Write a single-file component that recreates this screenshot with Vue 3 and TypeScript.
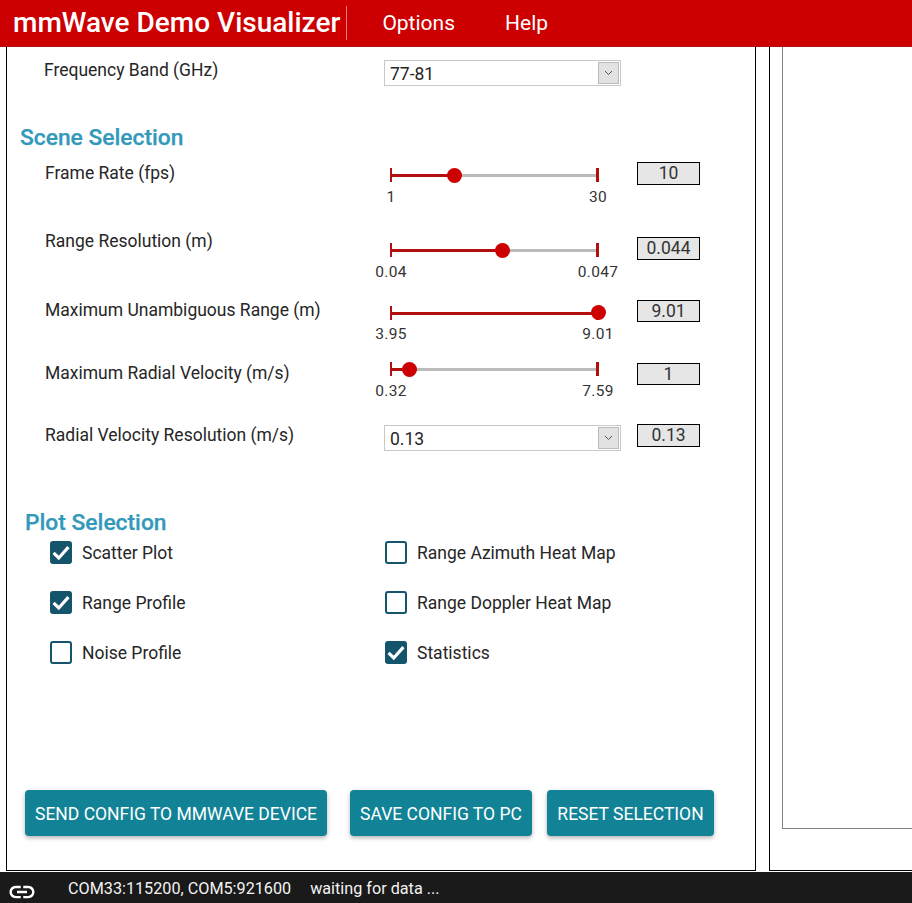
<script setup lang="ts">
interface Row {
  cls: string
  label: string
  value: string
  min?: string
  max?: string
  pct?: number
  select?: string
}

const rows: Row[] = [
  { cls: 'r1', label: 'Frame Rate (fps)', value: '10', min: '1', max: '30', pct: 30.8 },
  { cls: 'r2', label: 'Range Resolution (m)', value: '0.044', min: '0.04', max: '0.047', pct: 54 },
  { cls: 'r3', label: 'Maximum Unambiguous Range (m)', value: '9.01', min: '3.95', max: '9.01', pct: 100.4 },
  { cls: 'r4', label: 'Maximum Radial Velocity (m/s)', value: '1', min: '0.32', max: '7.59', pct: 8.8 },
  { cls: 'r5', label: 'Radial Velocity Resolution (m/s)', value: '0.13', select: '0.13' }
]

const plots = [
  { label: 'Scatter Plot', on: true },
  { label: 'Range Azimuth Heat Map', on: false },
  { label: 'Range Profile', on: true },
  { label: 'Range Doppler Heat Map', on: false },
  { label: 'Noise Profile', on: false },
  { label: 'Statistics', on: true }
]
</script>

<template>
  <div class="app">
    <header class="bar">
      <div class="title">mmWave Demo Visualizer</div>
      <nav class="menu">
        <span>Options</span>
        <span>Help</span>
      </nav>
    </header>

    <main class="main">
      <section class="panel left">
        <div class="row freq">
          <div class="label">Frequency Band (GHz)</div>
          <div class="control">
            <div class="select">
              <span>77-81</span>
              <span class="arrow">
                <svg width="9" height="6" viewBox="0 0 9 6"><path d="M1 1l3.5 3.5L8 1" fill="none" stroke="#555" stroke-width="1" /></svg>
              </span>
            </div>
          </div>
        </div>

        <h2 class="heading scene">Scene Selection</h2>

        <div v-for="row in rows" :key="row.label" class="row" :class="row.cls">
          <div class="label">{{ row.label }}</div>
          <div class="control">
            <div v-if="row.select" class="select">
              <span>{{ row.select }}</span>
              <span class="arrow">
                <svg width="9" height="6" viewBox="0 0 9 6"><path d="M1 1l3.5 3.5L8 1" fill="none" stroke="#555" stroke-width="1" /></svg>
              </span>
            </div>
            <div v-else class="slider">
              <div class="rail">
                <div class="fill" :style="{ width: Math.min(row.pct ?? 0, 100) + '%' }"></div>
                <i class="tick start"></i>
                <i class="tick end"></i>
                <b class="thumb" :style="{ left: row.pct + '%' }"></b>
              </div>
              <div class="ends">
                <span><em>{{ row.min }}</em></span>
                <span><em>{{ row.max }}</em></span>
              </div>
            </div>
          </div>
          <div class="value">{{ row.value }}</div>
        </div>

        <h2 class="heading plot">Plot Selection</h2>

        <div class="checks">
          <label v-for="p in plots" :key="p.label" class="check">
            <span class="box" :class="{ on: p.on }">
              <svg v-if="p.on" width="18" height="16" viewBox="0 0 16 14"><path d="M1.4 6.8l4.6 4.6 8.6-9.6" fill="none" stroke="#fff" stroke-width="2.8" /></svg>
            </span>
            <span class="text">{{ p.label }}</span>
          </label>
        </div>

        <div class="actions">
          <button class="btn send">SEND CONFIG TO MMWAVE DEVICE</button>
          <button class="btn save">SAVE CONFIG TO PC</button>
          <button class="btn reset">RESET SELECTION</button>
        </div>
      </section>

      <section class="panel right">
        <div class="plotbox"></div>
      </section>
    </main>

    <footer class="status">
      <svg class="link" width="30" height="30" viewBox="0 0 24 24"><path fill="#fff" d="M3.9 12c0-1.71 1.39-3.1 3.1-3.1h4V7H7c-2.76 0-5 2.24-5 5s2.24 5 5 5h4v-1.9H7c-1.71 0-3.1-1.39-3.1-3.1zM8 13h8v-2H8v2zm9-6h-4v1.9h4c1.71 0 3.1 1.39 3.1 3.1s-1.39 3.1-3.1 3.1h-4V17h4c2.76 0 5-2.24 5-5s-2.24-5-5-5z" /></svg>
      <span class="ports">COM33:115200, COM5:921600</span>
      <span>waiting for data ...</span>
    </footer>
  </div>
</template>

<style>
html, body { margin: 0; height: 100%; overflow: hidden; background: #fff; }
</style>

<style scoped>
.app {
  width: 912px;
  height: 903px;
  display: flex;
  flex-direction: column;
  overflow: hidden;
  font-family: Roboto, "Liberation Sans", sans-serif;
  color: #262626;
}
.bar {
  flex: none;
  height: 46px;
  background: #cc0000;
  border-bottom: 1px solid #b20c0c;
  display: flex;
  align-items: center;
  color: #fff;
  position: relative;
  z-index: 2;
}
.title {
  margin-left: 13px;
  padding-right: 6px;
  height: 34px;
  line-height: 34px;
  font-size: 28px;
  font-weight: 500;
  border-right: 1px solid #e58080;
  white-space: nowrap;
}
.menu {
  display: flex;
  gap: 50px;
  margin-left: 35px;
  font-size: 21px;
}
.main {
  flex: 1;
  min-height: 0;
  display: flex;
  gap: 13px;
  padding-left: 6px;
  padding-bottom: 1px;
  overflow: hidden;
}
.panel {
  flex: none;
  box-sizing: border-box;
  border: 1px solid #000;
  border-top: none;
}
.left {
  width: 750px;
  padding-top: 12px;
  display: flex;
  flex-direction: column;
}
.right {
  width: 400px;
  padding: 0 0 41px 12px;
  display: flex;
}
.plotbox {
  flex: 1;
  border: 1px solid #808080;
  border-top: none;
}
.row {
  display: grid;
  grid-template-columns: 323px 237px 63px;
  column-gap: 16px;
  padding-left: 38px;
  align-items: start;
}
.label {
  font-size: 17.5px;
  line-height: 22px;
  white-space: nowrap;
}
.freq { height: 64px; padding-left: 37px; grid-template-columns: 324px 237px 63px; }
.freq .control { margin-top: 1px; }
.r1 { height: 68px; }
.r1 .slider { margin-top: 7px; }
.r2 { height: 69px; }
.r2 .slider { margin-top: 14px; }
.r2 .value { margin-top: 7px; }
.r3 { height: 63px; }
.r3 .slider { margin-top: 8px; }
.r3 .value { margin-top: 1px; height: 22px; }
.r3 .ends { margin-top: 7px; }
.r3 .thumb { top: -2px; }
.r4 { height: 62px; }
.r4 .slider { margin-top: 1px; }
.r4 .value { margin-top: 1px; height: 22px; }
.r5 { height: 27px; }
.r5 .control { margin-top: 1px; }
.heading {
  margin: 0;
  height: 30px;
  line-height: 30px;
  font-size: 22.8px;
  font-weight: 500;
  color: #3399bb;
  -webkit-text-stroke: 0.25px #3399bb;
}
.scene { margin-left: 13px; margin-bottom: 9px; }
.plot { margin-left: 18px; margin-top: 56px; margin-bottom: 4px; padding-bottom: 1px; height: 29px; line-height: 32px; }
.select {
  box-sizing: border-box;
  height: 26px;
  border: 1px solid #c8c8c8;
  display: flex;
  align-items: center;
  justify-content: space-between;
  padding: 0 1px 0 5px;
  font-size: 17.5px;
}
.select > span:first-child { padding-top: 2px; }
.arrow {
  box-sizing: border-box;
  width: 21px;
  height: 22px;
  background: #e2e2e2;
  border: 1px solid #bbb;
  display: flex;
  align-items: center;
  justify-content: center;
}
.slider {
  margin-left: 6px;
  width: 209px;
}
.rail {
  position: relative;
  height: 12px;
  margin: 0 1px;
}
.rail::before {
  content: "";
  position: absolute;
  left: 0;
  right: 0;
  top: 5px;
  height: 3px;
  background: #bbb;
}
.fill {
  position: absolute;
  left: 0;
  top: 5px;
  height: 3px;
  background: #b30f0f;
}
.tick {
  position: absolute;
  top: -1px;
  width: 2px;
  height: 14px;
  background: #b30f0f;
}
.tick.start { left: -1px; }
.tick.end { right: -1px; width: 3px; }
.thumb {
  position: absolute;
  top: -1px;
  width: 15px;
  height: 15px;
  margin-left: -7.5px;
  border-radius: 50%;
  background: #cc0000;
}
.ends {
  display: flex;
  justify-content: space-between;
  margin: 8px 1px 0;
  font-size: 15.5px;
  line-height: 16px;
  letter-spacing: 0.3px;
  color: #333;
}
.ends span {
  width: 0;
  display: flex;
  justify-content: center;
  white-space: nowrap;
}
.ends em { font-style: normal; }
.r3 .ends { margin-top: 7px; }
.value {
  box-sizing: border-box;
  width: 63px;
  height: 23px;
  line-height: 21px;
  border: 1px solid #000;
  background: #e6e6e6;
  text-align: center;
  font-size: 17.5px;
  color: #333;
}
.checks {
  display: grid;
  grid-template-columns: 335px 300px;
  grid-auto-rows: 50px;
  padding-left: 43px;
}
.check {
  display: flex;
  align-items: flex-start;
  gap: 10px;
  font-size: 17.5px;
  line-height: 23px;
  white-space: nowrap;
}
.text { padding-top: 1px; }
.box {
  box-sizing: border-box;
  flex: none;
  width: 22px;
  height: 23px;
  border: 2px solid #14556b;
  border-radius: 3px;
  display: flex;
  align-items: center;
  justify-content: center;
}
.box.on { background: #14556b; }
.actions {
  margin-top: auto;
  margin-bottom: 34px;
  padding-left: 18px;
  display: flex;
}
.btn {
  height: 46px;
  padding: 2px 0 0;
  border: none;
  border-radius: 4px;
  background: #128396;
  color: #fff;
  font-family: inherit;
  font-size: 17.5px;
  box-shadow: 0 2px 4px rgba(0, 0, 0, 0.3);
  white-space: nowrap;
}
.send { width: 302px; }
.save { width: 182px; margin-left: 23px; }
.reset { width: 167px; margin-left: 15px; }
.status {
  flex: none;
  height: 31px;
  padding-top: 1px;
  box-sizing: border-box;
  background: #1a1a1a;
  color: #f2f2f2;
  display: flex;
  align-items: center;
  font-size: 16.2px;
  position: relative;
}
.link { position: absolute; left: 7px; top: 5px; }
.ports { margin-left: 68px; margin-right: 19px; }
</style>
